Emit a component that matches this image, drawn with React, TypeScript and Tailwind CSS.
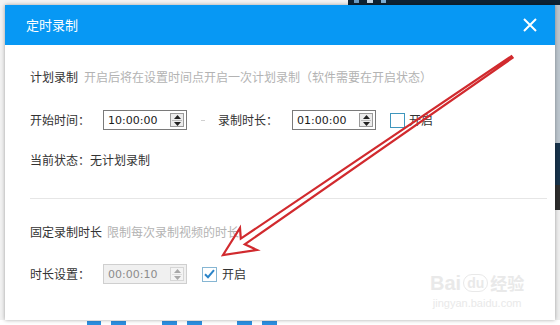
import React from 'react';

const SpinBox = ({ value, disabled }: { value: string; disabled?: boolean }) => (
  <div
    className={`flex h-[20px] w-[84px] items-center justify-between border pl-[4px] pr-[2px] ${
      disabled ? 'border-[#cfcfcf] bg-[#f0f0f0] text-[#8c8c8c]' : 'border-[#7a7a7a] bg-white text-[#1a1a1a]'
    }`}
  >
    <span className="font-['DejaVu_Sans',sans-serif] text-[11px] leading-none">{value}</span>
    <div
      className={`flex h-[14px] w-[14px] flex-col items-center justify-center gap-[1px] border ${
        disabled ? 'border-[#d6d6d6] bg-[#f4f4f4]' : 'border-[#9a9a9a] bg-[#ececec]'
      }`}
    >
      <svg width="7" height="4" viewBox="0 0 7 4">
        <path d="M0 4 L3.5 0 L7 4 Z" fill={disabled ? '#a8a8a8' : '#222'} />
      </svg>
      <div className={`h-px w-[10px] ${disabled ? 'bg-[#dedede]' : 'bg-[#bdbdbd]'}`} />
      <svg width="7" height="4" viewBox="0 0 7 4">
        <path d="M0 0 L7 0 L3.5 4 Z" fill={disabled ? '#a8a8a8' : '#222'} />
      </svg>
    </div>
  </div>
);

const CheckBox = ({ checked }: { checked?: boolean }) =>
  checked ? (
    <div className="flex h-[15px] w-[15px] items-center justify-center border border-[#86b6d3] bg-white">
      <svg width="11" height="10" viewBox="0 0 11 10">
        <path d="M1 5.2 L4 8.2 L10 1.2" fill="none" stroke="#2b84c8" strokeWidth="2" />
      </svg>
    </div>
  ) : (
    <div className="h-[15px] w-[15px] border border-[#3f96bd] bg-white" />
  );

export default function App() {
  return (
    <div className="relative h-[325px] w-[560px] overflow-hidden bg-white font-['Noto_Sans_CJK_SC','Microsoft_YaHei',sans-serif]">
      {/* desktop behind the dialog */}
      <div className="flex h-[5px]">
        <div className="w-[348px] bg-[#f3f3f3]" />
        <div className="flex flex-1 items-start gap-[8px] bg-[#0e2234] pl-[6px]">
          <div className="h-[3px] w-[5px] bg-[#6fa0c8]" />
          <div className="h-[3px] w-[6px] bg-[#c8d8e8]" />
          <div className="h-[3px] w-[5px] bg-[#7fb0d8]" />
        </div>
      </div>

      <div className="flex h-[315px]">
        <div className="w-[5px] bg-[#f2f2f2]" />

        {/* Dialog */}
        <div className="relative z-10 flex w-[550px] flex-col bg-white shadow-[0_0_4px_rgba(0,0,0,0.35)]">
          <div className="flex h-[40px] items-center justify-between bg-[#0798f4] pl-[21px] pr-[18px]">
            <span className="text-[13px] text-white">定时录制</span>
            <svg width="14" height="14" viewBox="0 0 14 14">
              <path d="M1 1 L13 13 M13 1 L1 13" stroke="#fff" strokeWidth="2" />
            </svg>
          </div>

          <div className="flex flex-col pl-[25px] pr-[8px] pt-[22px] text-[12px] text-[#333]">
            <div className="flex h-[20px] items-center">
              <span>计划录制</span>
              <span className="ml-[6px] text-[#b3b3b3]">开启后将在设置时间点开启一次计划录制（软件需要在开启状态）</span>
            </div>

            <div className="mt-[23px] flex h-[20px] items-center">
              <span className="w-[73px]">开始时间：</span>
              <SpinBox value="10:00:00" />
              <div className="flex w-[31px] justify-center">
                <div className="h-px w-[4px] bg-[#d0d0d0]" />
              </div>
              <span className="w-[74px]">录制时长：</span>
              <SpinBox value="01:00:00" />
              <div className="ml-[14px]">
                <CheckBox />
              </div>
              <span className="ml-[4px]">开启</span>
            </div>

            <div className="mt-[20px] flex h-[20px] items-center">
              <span>当前状态：无计划录制</span>
            </div>

            <div className="mt-[28px] h-px bg-[#e6e6e6]" />

            <div className="mt-[23px] flex h-[20px] items-center">
              <span>固定录制时长</span>
              <span className="ml-[5px] text-[#b3b3b3]">限制每次录制视频的时长</span>
            </div>

            <div className="mt-[22px] flex h-[20px] items-center">
              <span className="w-[73px]">时长设置：</span>
              <SpinBox value="00:00:10" disabled />
              <div className="ml-[15px]">
                <CheckBox checked />
              </div>
              <span className="ml-[5px]">开启</span>
            </div>
          </div>

          {/* watermark */}
          <div className="pointer-events-none absolute left-[425px] top-[268px] flex flex-col items-center gap-[4px] text-[#e9e9e9]">
            <div className="flex h-[20px] items-center font-['Liberation_Sans',sans-serif] text-[20px] font-bold leading-none">
              <span>Bai</span>
              <span className="ml-[2px] rounded-full border border-[#e9e9e9] px-[3px] text-[14px] leading-[16px]">du</span>
              <span className="ml-[2px] font-['Noto_Sans_CJK_SC',sans-serif] text-[17px] leading-[20px]">经验</span>
            </div>
            <span className="font-['Liberation_Sans',sans-serif] text-[11px] leading-[12px]">jingyan.baidu.com</span>
          </div>
        </div>

        <div className="flex w-[5px] flex-col">
          <div className="h-[138px] bg-[#bcc6ce]" />
          <div className="h-[42px] bg-[#18344c]" />
          <div className="h-[25px] bg-[#2e2e2e]" />
          <div className="flex-1 bg-[#eeeeee]" />
        </div>
      </div>

      <div className="flex h-[5px] items-end pl-[87px]">
        <div className="h-[4px] w-[14px] bg-[#2b8fe0]" />
        <div className="ml-[10px] h-[4px] w-[15px] bg-[#2b8fe0]" />
        <div className="ml-[36px] h-[4px] w-[15px] bg-[#2b8fe0]" />
        <div className="ml-[10px] h-[4px] w-[15px] bg-[#2b8fe0]" />
        <div className="ml-[35px] h-[4px] w-[15px] bg-[#2b8fe0]" />
        <div className="ml-[10px] h-[4px] w-[15px] bg-[#2b8fe0]" />
      </div>

      {/* red annotation arrow */}
      <svg className="pointer-events-none absolute left-0 top-0 z-20" width="560" height="325" viewBox="0 0 560 325">
        <polygon
          points="223,255 240,228 240.8,238.6 511.4,56.2 512.6,57.8 244.8,244.3 257,250"
          fill="none"
          stroke="#d12a2e"
          strokeWidth="2.2"
          strokeLinejoin="miter"
        />
      </svg>
    </div>
  );
}
